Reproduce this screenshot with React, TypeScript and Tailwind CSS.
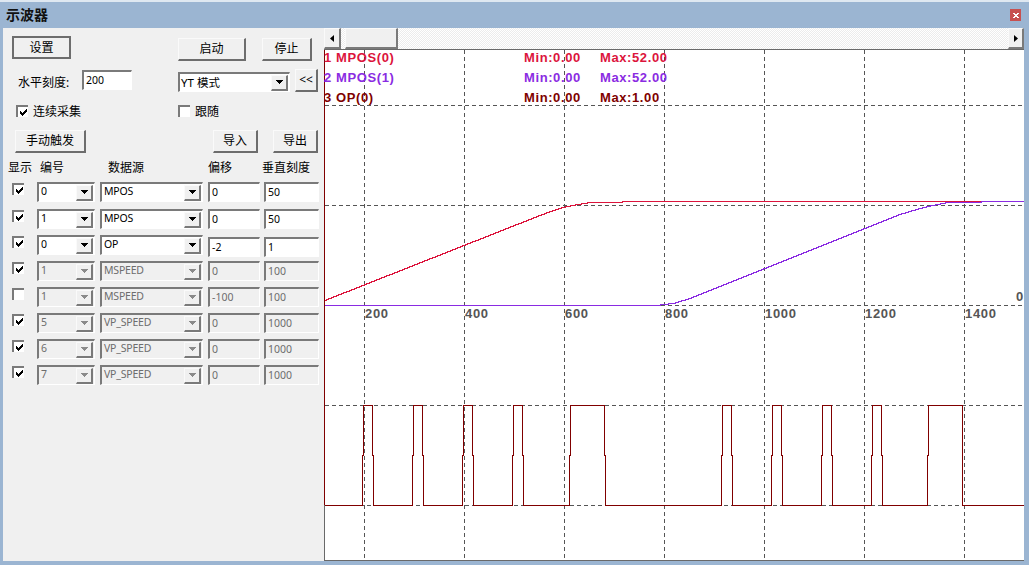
import React from "react";

const font = "[font-family:'Noto_Sans','Noto_Sans_CJK_SC',sans-serif]";

interface BtnProps {
  label: string;
  className: string;
  isDefault?: boolean;
}
function Btn({ label, className, isDefault }: BtnProps) {
  return (
    <button
      className={`flex items-center justify-center bg-[#f0f0f0] text-[12px] text-black border-b-2 border-r-2 border-b-[#6d6d6d] border-r-[#6d6d6d] border-t border-l ${
        isDefault ? "border-t-[#6d6d6d] border-l-[#6d6d6d] border-t-2 border-l-2" : "border-t-[#fafafa] border-l-[#fafafa]"
      } ${className}`}
    >
      {label}
    </button>
  );
}

function Arrow({ off }: { off?: boolean }) {
  return (
    <svg width="7" height="4" viewBox="0 0 7 4" shapeRendering="crispEdges">
      <path d="M0 0h7v1h-1v1h-1v1h-1v1h-1v-1h-1v-1h-1v-1h-1z" fill={off ? "#8a8a8a" : "#000"} />
    </svg>
  );
}

interface ComboProps {
  value: string;
  off?: boolean;
  className: string;
}
function Combo({ value, off, className }: ComboProps) {
  return (
    <div
      className={`flex items-center border-t-2 border-l-2 border-b border-r border-t-[#7a7a7a] border-l-[#7a7a7a] border-b-white border-r-white pl-[2px] pr-[1px] ${
        off ? "bg-[#f0f0f0] text-[#6d6d6d]" : "bg-white text-black"
      } ${className}`}
    >
      <span className="flex-1 text-[10.5px] leading-none -mt-[3px] tracking-[-0.2px] whitespace-nowrap">{value}</span>
      <span className="flex items-center justify-center w-[17px] h-[16px] bg-[#f0f0f0] border-t border-l border-t-[#fafafa] border-l-[#fafafa] border-b-2 border-r-2 border-b-[#7a7a7a] border-r-[#7a7a7a]">
        <Arrow off={off} />
      </span>
    </div>
  );
}

interface BoxProps {
  value: string;
  off?: boolean;
  className: string;
}
function Box({ value, off, className }: BoxProps) {
  return (
    <div
      className={`flex items-center border-t-2 border-l-2 border-b border-r border-t-[#7a7a7a] border-l-[#7a7a7a] border-b-white border-r-white pl-[2px] text-[10.5px] leading-none ${
        off ? "bg-[#f0f0f0] text-[#6d6d6d]" : "bg-white text-black"
      } ${className}`}
    >
      {value}
    </div>
  );
}

function Check({ on, className }: { on?: boolean; className: string }) {
  return (
    <div className={`w-[12px] h-[12px] shrink-0 bg-white border-t-2 border-l-2 border-t-[#7a7a7a] border-l-[#7a7a7a] flex items-center justify-center ${className}`}>
      {on && (
        <svg width="7" height="7" viewBox="0 0 7 7" shapeRendering="crispEdges">
          <path d="M6 0h1v3h-1v1h-1v1h-1v1h-1v1h-1v-1h-1v-1h-1v-3h1v1h1v1h1v-1h1v-1h1v-1h1z" fill="#000" />
        </svg>
      )}
    </div>
  );
}

const rows = [
  { on: true, id: "0", src: "MPOS", ofs: "0", scale: "50", h: "h-[27px]", box: "" },
  { on: true, id: "1", src: "MPOS", ofs: "0", scale: "50", h: "h-[26px]", box: "" },
  { on: true, id: "0", src: "OP", ofs: "-2", scale: "1", h: "h-[26px]", box: "mt-[2px]" },
  { on: true, id: "1", src: "MSPEED", ofs: "0", scale: "100", off: true, h: "h-[26px]", box: "" },
  { on: false, id: "1", src: "MSPEED", ofs: "-100", scale: "100", off: true, h: "h-[26px]", box: "" },
  { on: true, id: "5", src: "VP_SPEED", ofs: "0", scale: "1000", off: true, h: "h-[26px]", box: "" },
  { on: true, id: "6", src: "VP_SPEED", ofs: "0", scale: "1000", off: true, h: "h-[26px]", box: "" },
  { on: true, id: "7", src: "VP_SPEED", ofs: "0", scale: "1000", off: true, h: "h-[26px]", box: "" },
];

function SidePanel() {
  return (
    <div className="w-[321px] shrink-0 h-full bg-[#f0f0f0] pt-[8px] text-[12px] text-black">
      <div className="flex h-[34px] items-start">
        <Btn label="设置" isDefault className="ml-[9px] w-[59px] h-[23px]" />
        <Btn label="启动" className="ml-[107px] mt-[2px] w-[68px] h-[23px]" />
        <Btn label="停止" className="ml-[16px] mt-[2px] w-[50px] h-[23px]" />
      </div>
      <div className="flex h-[35px] items-start">
        <span className="ml-[15px] mt-[4px] w-[64px] whitespace-nowrap">水平刻度:</span>
        <Box value="200" className="w-[50px] h-[20px]" />
        <div className="ml-[46px] mt-[2px] w-[112px] h-[20px] flex items-center border-t-2 border-l-2 border-b border-r border-t-[#7a7a7a] border-l-[#7a7a7a] border-b-white border-r-white bg-white pl-[1px] pr-[1px]">
          <span className="flex-1 text-[11.5px] leading-none">YT 模式</span>
          <span className="flex items-center justify-center w-[17px] h-[16px] bg-[#f0f0f0] border-t border-l border-t-[#fafafa] border-l-[#fafafa] border-b-2 border-r-2 border-b-[#7a7a7a] border-r-[#7a7a7a]">
            <Arrow />
          </span>
        </div>
        <Btn label="<<" className="ml-[5px] -mt-[1px] w-[23px] h-[23px]" />
      </div>
      <div className="flex h-[25px] items-start">
        <Check on className="ml-[13px]" />
        <span className="ml-[5px] w-[145px] leading-[14px]">连续采集</span>
        <Check />
        <span className="ml-[5px] leading-[14px]">跟随</span>
      </div>
      <div className="flex h-[30px] items-start">
        <Btn label="手动触发" className="ml-[12px] w-[71px] h-[23px]" />
        <Btn label="导入" className="ml-[127px] w-[45px] h-[23px]" />
        <Btn label="导出" className="ml-[15px] w-[45px] h-[23px]" />
      </div>
      <div className="flex h-[22px] items-start leading-[16px] whitespace-nowrap">
        <span className="ml-[5px] w-[32px]">显示</span>
        <span className="w-[68px]">编号</span>
        <span className="w-[100px]">数据源</span>
        <span className="w-[54px]">偏移</span>
        <span>垂直刻度</span>
      </div>
      {rows.map((r, i) => (
        <div key={i} className={`flex items-start ${r.h}`}>
          <Check on={r.on} className="ml-[9px] mt-[1px]" />
          <Combo value={r.id} off={r.off} className="ml-[13px] w-[58px] h-[20px]" />
          <Combo value={r.src} off={r.off} className="ml-[5px] w-[103px] h-[20px]" />
          <Box value={r.ofs} off={r.off} className={`ml-[5px] w-[52px] h-[20px] ${r.box}`} />
          <Box value={r.scale} off={r.off} className={`ml-[4px] w-[55px] h-[20px] ${r.box}`} />
        </div>
      ))}
    </div>
  );
}

const pulses = [
  [362.5, 363.5, 372.5, 373.5],
  [412.5, 413.5, 422.5, 423.5],
  [462.5, 463.5, 472.5, 473.5],
  [512.5, 513.5, 522.5, 523.5],
  [569.5, 570.5, 604.5, 605.5],
  [721.5, 722.5, 731.5, 732.5],
  [771.5, 772.5, 781.5, 782.5],
  [821.5, 822.5, 831.5, 832.5],
  [871.5, 872.5, 881.5, 882.5],
  [927.5, 928.5, 962.5, 962.5],
];

function opPath() {
  let d = "M325 505.5";
  for (const [a, b, c, e] of pulses) {
    d += ` H${a} V455.5 H${b} V405.5 H${c} V455.5 H${e} V505.5`;
  }
  return d + " H1024";
}

// the traces are sampled per pixel, so they come out stepped like the GDI original
function stairs(pts: number[][]) {
  let d = `M${pts[0][0]} ${Math.round(pts[0][1]) + 0.5}`;
  for (let i = 1; i < pts.length; i++) {
    const [x0, y0] = pts[i - 1];
    const [x1, y1] = pts[i];
    for (let x = x0 + 1; x <= x1; x++) {
      const y = y0 + ((y1 - y0) * (x - x0)) / (x1 - x0);
      d += ` V${Math.round(y) + 0.5} H${x}`;
    }
  }
  return d;
}

const redPts = [
  [325, 300], [540, 215], [555, 209.5], [565, 206.5], [575, 204.5], [585, 203], [590, 202], [622, 202], [623, 201], [982, 201],
];
const purplePts = [
  [325, 305], [655, 305], [665, 304], [675, 302.5], [690, 298], [900, 214], [915, 209.5], [930, 205.5], [945, 202.5], [950, 202], [981, 202], [982, 201], [1024, 201],
];

function Chart() {
  const vx = [364, 464, 564, 664, 764, 864, 964];
  const hy = [105, 205, 305, 405, 505];
  const axis = [
    [365, "200"],
    [465, "400"],
    [565, "600"],
    [665, "800"],
    [765, "1000"],
    [865, "1200"],
    [965, "1400"],
  ] as const;
  const legend = [
    { y: 62, c: "#dc143c", name: "1 MPOS(0)", min: "Min:0.00", max: "Max:52.00" },
    { y: 82, c: "#8a2be2", name: "2 MPOS(1)", min: "Min:0.00", max: "Max:52.00" },
    { y: 102, c: "#800000", name: "3 OP(0)", min: "Min:0.00", max: "Max:1.00" },
  ];
  return (
    <div className="flex-1 min-h-0 bg-white border-t border-b border-[#696969]">
      <svg width="700" height="510" viewBox="324 50 700 510" className="block" fontFamily="'Liberation Sans', sans-serif">
        <g stroke="#555" strokeDasharray="4 3" shapeRendering="crispEdges">
          {vx.map((x) => (
            <line key={x} x1={x + 0.5} x2={x + 0.5} y1="50" y2="560" />
          ))}
          {hy.map((y) => (
            <line key={y} y1={y + 0.5} y2={y + 0.5} x1="325" x2="1024" />
          ))}
        </g>
        <g shapeRendering="crispEdges" fill="none">
          <path d="M324.5 50V505" stroke="#800000" />
          <path d="M324.5 505V560" stroke="#696969" />
          <path d={opPath()} stroke="#800000" />
          <path d={stairs(redPts)} stroke="#dc143c" />
          <path d={stairs(purplePts)} stroke="#8a2be2" />
        </g>
        {axis.map(([x, t]) => (
          <text key={t} x={x} y="318" fontSize="13" fontWeight="700" fill="#555" letterSpacing="0.7">
            {t}
          </text>
        ))}
        <text x="1016" y="301" fontSize="13" fontWeight="700" fill="#555">
          0
        </text>
        {legend.map((l) => (
          <g key={l.name} fontSize="13" fontWeight="700" fill={l.c} letterSpacing="0.6">
            <text x="324" y={l.y}>{l.name}</text>
            <text x="524" y={l.y}>{l.min}</text>
            <text x="600" y={l.y}>{l.max}</text>
          </g>
        ))}
      </svg>
    </div>
  );
}

function ScrollBar() {
  return (
    <div className="h-[21px] shrink-0 flex bg-[repeating-conic-gradient(#ececec_0_25%,#ffffff_0_50%)] bg-[length:2px_2px]">
      <div className="w-[17px] flex items-center justify-center bg-[#f0f0f0] border-t border-l border-t-[#fafafa] border-l-[#fafafa] border-b-2 border-r-2 border-b-[#7a7a7a] border-r-[#7a7a7a]">
        <svg width="4" height="7" viewBox="0 0 4 7"><path d="M4 0v7L0 3.5z" fill="#000" /></svg>
      </div>
      <div className="ml-[4px] w-[53px] bg-[#f0f0f0] border-t border-l border-t-[#fafafa] border-l-[#fafafa] border-b-2 border-r-2 border-b-[#7a7a7a] border-r-[#7a7a7a]" />
      <div className="ml-auto w-[16px] flex items-center justify-center bg-[#f0f0f0] border-t border-l border-t-[#fafafa] border-l-[#fafafa] border-b-2 border-r-2 border-b-[#7a7a7a] border-r-[#7a7a7a]">
        <svg width="4" height="7" viewBox="0 0 4 7"><path d="M0 0v7L4 3.5z" fill="#000" /></svg>
      </div>
    </div>
  );
}

export default function App() {
  return (
    <div className={`w-[1029px] h-[565px] overflow-hidden flex flex-col bg-[#9bb5d2] border-t-2 border-t-[#dfe8f1] ${font}`}>
      <div className="h-[26px] shrink-0 flex items-center pl-[6px] pr-[8px]">
        <span className="text-[14px] font-bold text-[#111] flex-1 leading-none">示波器</span>
        <span className="w-[11px] h-[12px] bg-[#c75050] text-white flex items-center justify-center">
          <svg width="6" height="5" viewBox="0 0 6 5" shapeRendering="crispEdges">
            <path d="M0 0h2v1h2v-1h2v1h-1v1h-1v1h1v1h1v1h-2v-1h-2v1h-2v-1h1v-1h1v-1h-1v-1h-1z" fill="#fff" />
          </svg>
        </span>
      </div>
      <div className="flex-1 min-h-0 flex pl-[3px] pr-[5px] pb-[4px]">
        <SidePanel />
        <div className="flex-1 min-w-0 flex flex-col bg-[#f0f0f0]">
          <ScrollBar />
          <Chart />
        </div>
      </div>
    </div>
  );
}
